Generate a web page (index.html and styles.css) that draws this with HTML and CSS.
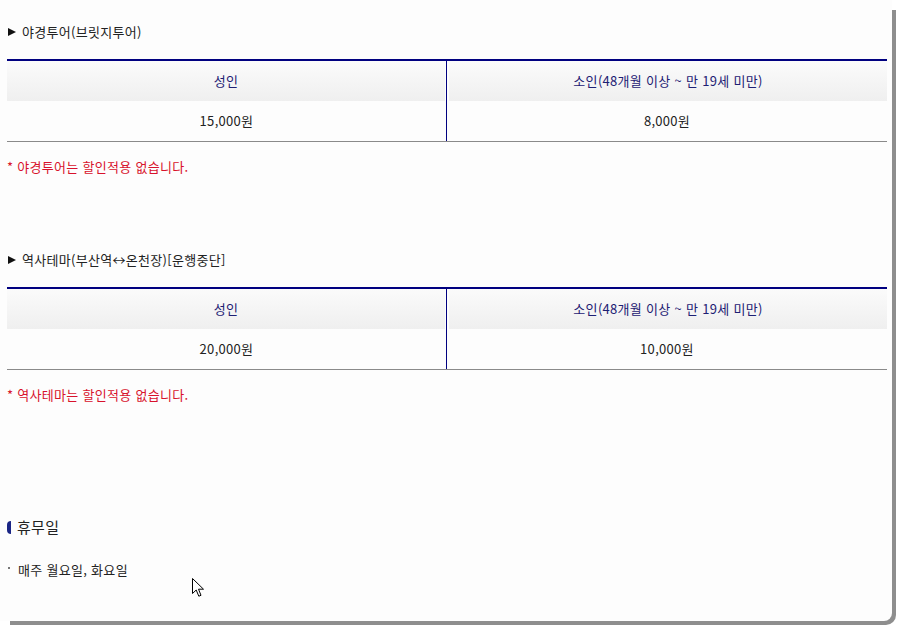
FILE: index.html
```html
<!DOCTYPE html>
<html lang="ko">
<head>
<meta charset="utf-8">
<title>요금안내</title>
<link rel="stylesheet" href="styles.css">
</head>
<body>
<div class="window">
  <div class="content">
    <h3 class="sub-title"><span class="tri"></span>야경투어(브릿지투어)</h3>
    <div class="price-table">
      <div class="col col-left">
        <div class="th">성인</div>
        <div class="td">15,000원</div>
      </div>
      <div class="col col-right">
        <div class="th">소인(48개월 이상 ~ 만 19세 미만)</div>
        <div class="td">8,000원</div>
      </div>
    </div>
    <p class="note">* 야경투어는 할인적용 없습니다.</p>

    <h3 class="sub-title second"><span class="tri"></span>역사테마(부산역↔온천장)[운행중단]</h3>
    <div class="price-table">
      <div class="col col-left">
        <div class="th">성인</div>
        <div class="td">20,000원</div>
      </div>
      <div class="col col-right">
        <div class="th">소인(48개월 이상 ~ 만 19세 미만)</div>
        <div class="td">10,000원</div>
      </div>
    </div>
    <p class="note">* 역사테마는 할인적용 없습니다.</p>

    <h2 class="section-title"><span class="bullet"></span>휴무일</h2>
    <p class="list-item"><span class="dot"></span>매주 월요일, 화요일</p>
  </div>
  <svg class="cursor" width="13" height="20" viewBox="0 0 13 20" aria-hidden="true">
    <path d="M0.5 0.5 L0.5 15.5 L4.2 12 L6.8 18.2 L9 17.3 L6.5 11.2 L11.5 11.2 Z" fill="#fff" stroke="#000" stroke-width="1" stroke-linejoin="miter"/>
  </svg>
</div>
</body>
</html>
```

FILE: styles.css
```css
html {
  margin: 0;
  padding: 0;
  background: #ffffff;
}

body {
  margin: 0;
  padding: 0;
  height: 628px;
  overflow: hidden;
  font-family: "Noto Sans CJK KR", "Noto Sans", sans-serif;
  font-size: 13px;
  letter-spacing: 0.3px;
  color: #222;
}

.window {
  position: relative;
  width: 892px;
  height: 621px;
  background: #fdfdfd;
  border-radius: 0 0 8px 0;
}

.window::after {
  content: "";
  position: absolute;
  top: 10px;
  left: 10px;
  right: -4px;
  bottom: -4px;
  background: #8e8e8e;
  border-radius: 0 0 10px 0;
  z-index: -1;
}

.content {
  padding: 23px 0 0 7px;
  width: 880px;
}

.sub-title {
  margin: 0 0 18px 0;
  font-size: 13px;
  font-weight: normal;
  line-height: 18px;
  height: 18px;
  color: #222;
  display: flex;
  align-items: center;
}

.sub-title .tri {
  display: inline-block;
  width: 0;
  height: 0;
  border-left: 8px solid #111;
  border-top: 4.5px solid transparent;
  border-bottom: 4.5px solid transparent;
  margin: 0 6px 0 1px;
}

.sub-title.second {
  margin-top: 75px;
}

.price-table {
  display: flex;
  border-top: 2px solid #000080;
  border-bottom: 1px solid #8a8a8a;
}

.col {
  display: flex;
  flex-direction: column;
}

.col-left {
  width: 439px;
}

.col-right {
  width: 440px;
  border-left: 1px solid #000080;
}

.th {
  height: 40px;
  line-height: 40px;
  text-align: center;
  color: #1d2073;
  background: linear-gradient(#fbfbfb, #efefef);
}

.col-left .th {
  margin-right: 1px;
}

.col-right .th {
  margin-left: 2px;
}

.td {
  height: 40px;
  line-height: 40px;
  text-align: center;
  color: #222;
}

.note {
  margin: 16px 0 0 0;
  line-height: 18px;
  color: #d8122c;
}

.section-title {
  margin: 113px 0 0 0;
  font-size: 15px;
  font-weight: normal;
  line-height: 20px;
  color: #222;
  display: flex;
  align-items: center;
}

.bullet {
  display: inline-block;
  width: 4px;
  height: 13px;
  background: #1a2585;
  border-radius: 4px 0 0 4px;
  margin-right: 6px;
}

.list-item {
  margin: 24px 0 0 0;
  line-height: 18px;
  display: flex;
  align-items: center;
  color: #222;
}

.dot {
  display: inline-block;
  width: 2px;
  height: 2px;
  background: #777;
  margin: 0 8px 5px 1px;
}

.cursor {
  position: absolute;
  left: 192px;
  top: 578px;
}
```
